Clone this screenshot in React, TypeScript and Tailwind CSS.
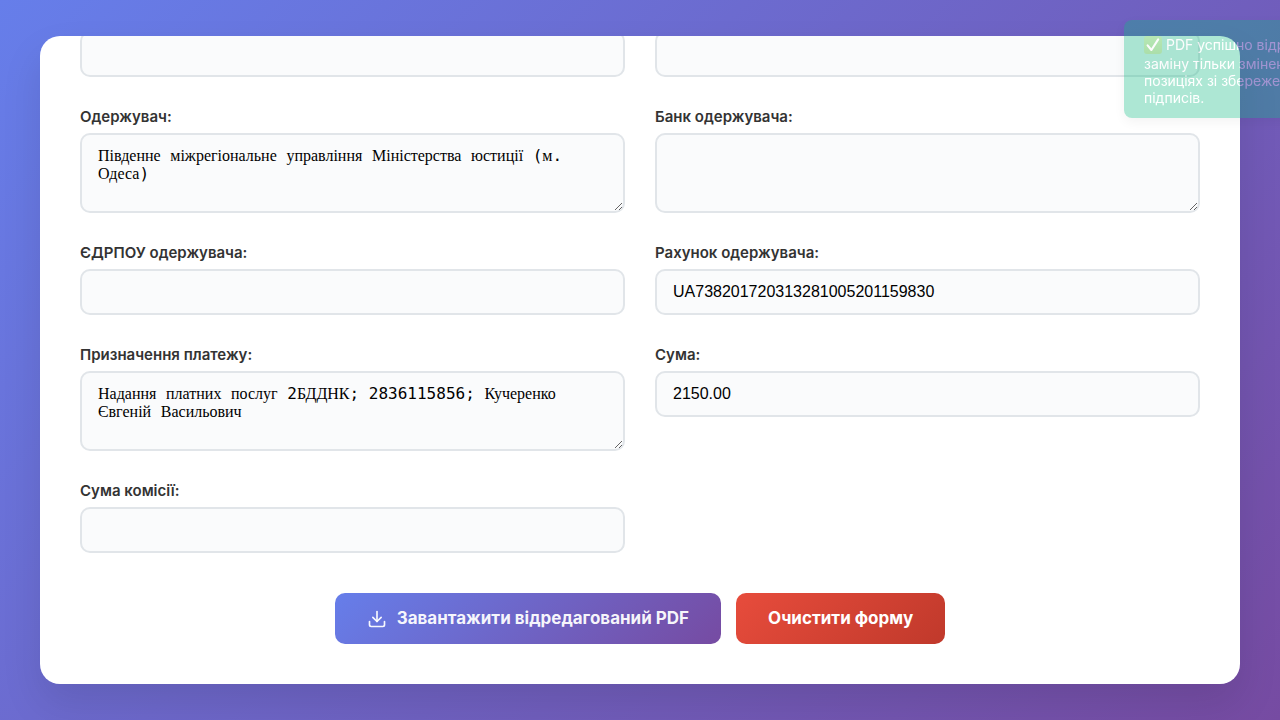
import { useId, useState } from "react";

const fieldBox =
  "w-full rounded-[10px] border-2 border-[#e1e5e9] bg-[#fafbfc] px-4 text-base text-black outline-none focus:border-[#667eea]";

const labelText = "text-[15px] leading-5 font-semibold text-[#333333]";

function TextField({ label, value = "" }: { label: string; value?: string }) {
  const id = useId();
  const [text, setText] = useState(value);
  return (
    <div className="flex flex-col gap-1.5">
      <label htmlFor={id} className={labelText}>
        {label}
      </label>
      <input
        id={id}
        type="text"
        value={text}
        onChange={(e) => setText(e.target.value)}
        className={`${fieldBox} h-[46px] font-['Liberation_Sans',Arial,sans-serif]`}
      />
    </div>
  );
}

// Cyrillic words are set in a serif face, everything else in monospace.
// The typeset layer is shown until the field is being edited.
function TypesetText({ text }: { text: string }) {
  const runs = text.split(/([\u0400-\u04ff]+)/);
  return (
    <>
      {runs.map((run, i) => (
        <span
          key={i}
          className={
            i % 2 === 1
              ? "leading-none font-['Liberation_Serif','Times_New_Roman',serif]"
              : "leading-none font-['DejaVu_Sans_Mono',monospace]"
          }
        >
          {run}
        </span>
      ))}
    </>
  );
}

function TextArea({ label, value = "" }: { label: string; value?: string }) {
  const id = useId();
  const [text, setText] = useState(value);
  return (
    <div className="flex flex-col gap-1.5">
      <label htmlFor={id} className={labelText}>
        {label}
      </label>
      <div className="grid">
        <textarea
          id={id}
          value={text}
          onChange={(e) => setText(e.target.value)}
          className="peer col-start-1 row-start-1 h-20 w-full resize-y rounded-[10px] border-2 border-[#e1e5e9] bg-[#fafbfc] px-4 py-3 font-['Liberation_Serif','Times_New_Roman',serif] text-base leading-[18px] text-transparent outline-none focus:border-[#667eea] focus:text-black"
        />
        <div
          aria-hidden="true"
          className="pointer-events-none col-start-1 row-start-1 overflow-hidden border-2 border-transparent px-4 py-3 font-['Liberation_Serif','Times_New_Roman',serif] text-base leading-[18px] break-words whitespace-pre-wrap text-black peer-focus:invisible"
        >
          <TypesetText text={text} />
        </div>
      </div>
    </div>
  );
}

function DownloadIcon() {
  return (
    <svg
      className="size-5 shrink-0"
      viewBox="0 0 24 24"
      fill="none"
      stroke="currentColor"
      strokeWidth="2"
      strokeLinecap="round"
      strokeLinejoin="round"
      aria-hidden="true"
    >
      <path d="M21 15v4a2 2 0 0 1-2 2H5a2 2 0 0 1-2-2v-4" />
      <polyline points="7 10 12 15 17 10" />
      <line x1="12" y1="15" x2="12" y2="3" />
    </svg>
  );
}

function CheckMark() {
  return (
    <svg className="mr-1 inline size-[18px] align-[-4px]" viewBox="0 0 18 18" role="img" aria-label="Готово">
      <defs>
        <linearGradient id="mark" x1="0" y1="0" x2="0" y2="1">
          <stop offset="0" stopColor="#35c42c" />
          <stop offset="1" stopColor="#14a80c" />
        </linearGradient>
      </defs>
      <rect width="18" height="18" rx="3" fill="url(#mark)" />
      <path d="M3.6 9.4l3.8 4.6L14.2 3.4" fill="none" stroke="#fff" strokeWidth="2.1" strokeLinecap="round" strokeLinejoin="round" />
    </svg>
  );
}

function Toast() {
  return (
    <div
      role="status"
      className="fixed top-5 left-[calc(100%-156px)] w-[320px] rounded-lg bg-[#10b981] px-5 pt-[14px] pb-3 text-sm leading-[17px] whitespace-nowrap text-white opacity-[0.34] shadow-[0_4px_12px_rgba(0,0,0,0.15)]"
    >
      <p className="h-[21px] leading-[22px]">
        <CheckMark />
        PDF успішно відредаговано:
      </p>
      <p>заміну тільки змінених даних</p>
      <p>позиціях зі збереженням</p>
      <p>підписів.</p>
    </div>
  );
}

export default function App() {
  return (
    <div className="flex min-h-screen items-center bg-[linear-gradient(135deg,#667eea_0%,#764ba2_100%)] px-10 font-[Inter,'Liberation_Sans',sans-serif]">
      <main className="flex max-h-[90vh] w-full flex-col-reverse overflow-y-auto rounded-[20px] bg-white shadow-[0_20px_40px_rgba(0,0,0,0.1)] [scrollbar-width:none]">
        <form className="px-10 pb-10" onSubmit={(e) => e.preventDefault()}>
          <div className="grid grid-cols-2 gap-[30px]">
            <input type="text" aria-label="Банк платника" className={`${fieldBox} h-[46px]`} />
            <input type="text" aria-label="Рахунок платника" className={`${fieldBox} h-[46px]`} />
            <TextArea label="Одержувач:" value="Південне міжрегіональне управління Міністерства юстиції (м. Одеса)" />
            <TextArea label="Банк одержувача:" />
            <TextField label="ЄДРПОУ одержувача:" />
            <TextField label="Рахунок одержувача:" value="UA738201720313281005201159830" />
            <TextArea
              label="Призначення платежу:"
              value="Надання платних послуг 2БДДНК; 2836115856; Кучеренко Євгеній Васильович"
            />
            <TextField label="Сума:" value="2150.00" />
            <TextField label="Сума комісії:" />
          </div>
          <div className="mt-10 flex justify-center gap-[15px]">
            <button
              type="submit"
              className="flex h-[51px] items-center gap-[10px] rounded-[10px] bg-[linear-gradient(135deg,#667eea_0%,#764ba2_100%)] px-8 text-[17px] font-bold text-white/95"
            >
              <DownloadIcon />
              Завантажити відредагований PDF
            </button>
            <button
              type="reset"
              className="flex h-[51px] items-center rounded-[10px] bg-[linear-gradient(135deg,#e74c3c_0%,#c0392b_100%)] px-8 text-[17px] font-bold text-white"
            >
              Очистити форму
            </button>
          </div>
        </form>
      </main>
      <Toast />
    </div>
  );
}
